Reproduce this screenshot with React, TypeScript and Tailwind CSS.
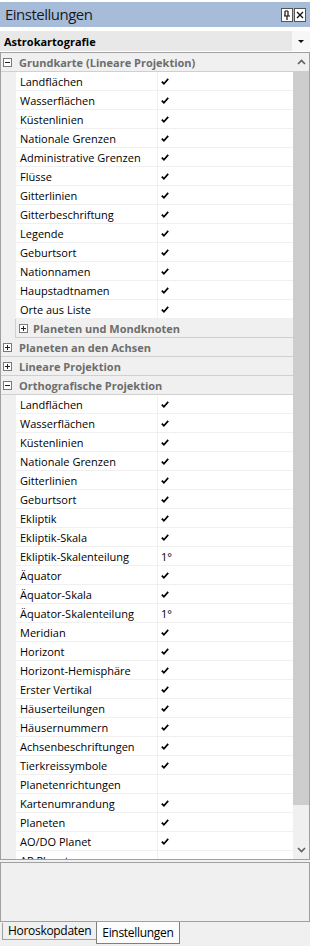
import React from "react";

type Row =
  | { kind: "cat"; label: string; open: boolean; sub?: boolean }
  | { kind: "prop"; label: string; value?: string };

const check = (label: string, value = "check"): Row => ({ kind: "prop", label, value });

const rows: Row[] = [
  { kind: "cat", label: "Grundkarte (Lineare Projektion)", open: true },
  check("Landflächen"),
  check("Wasserflächen"),
  check("Küstenlinien"),
  check("Nationale Grenzen"),
  check("Administrative Grenzen"),
  check("Flüsse"),
  check("Gitterlinien"),
  check("Gitterbeschriftung"),
  check("Legende"),
  check("Geburtsort"),
  check("Nationnamen"),
  check("Haupstadtnamen"),
  check("Orte aus Liste"),
  { kind: "cat", label: "Planeten und Mondknoten", open: false, sub: true },
  { kind: "cat", label: "Planeten an den Achsen", open: false },
  { kind: "cat", label: "Lineare Projektion", open: false },
  { kind: "cat", label: "Orthografische Projektion", open: true },
  check("Landflächen"),
  check("Wasserflächen"),
  check("Küstenlinien"),
  check("Nationale Grenzen"),
  check("Gitterlinien"),
  check("Geburtsort"),
  check("Ekliptik"),
  check("Ekliptik-Skala"),
  check("Ekliptik-Skalenteilung", "1°"),
  check("Äquator"),
  check("Äquator-Skala"),
  check("Äquator-Skalenteilung", "1°"),
  check("Meridian"),
  check("Horizont"),
  check("Horizont-Hemisphäre"),
  check("Erster Vertikal"),
  check("Häuserteilungen"),
  check("Häusernummern"),
  check("Achsenbeschriftungen"),
  check("Tierkreissymbole"),
  check("Planetenrichtungen", ""),
  check("Kartenumrandung"),
  check("Planeten"),
  check("AO/DO Planet"),
  check("AP Planet", ""),
];

function Toggle({ open }: { open: boolean }) {
  return (
    <svg width="9" height="9" viewBox="0 0 9 9" className="shrink-0">
      <rect x="0.5" y="0.5" width="8" height="8" fill="#fff" stroke="#7a7a7a" />
      <path d="M2 4.5h5" stroke="#222" />
      {!open && <path d="M4.5 2v5" stroke="#222" />}
    </svg>
  );
}

function Check() {
  return (
    <svg width="8" height="7" viewBox="0 0 8 7">
      <path d="M0.8 3.6 L2.9 5.7 L7.2 0.9" fill="none" stroke="#000" strokeWidth="1.7" />
    </svg>
  );
}

function Chevron({ up }: { up?: boolean }) {
  return (
    <svg width="9" height="6" viewBox="0 0 9 6">
      <path
        d={up ? "M1 5 L4.5 1.5 L8 5" : "M1 1 L4.5 4.5 L8 1"}
        fill="none"
        stroke="#606060"
        strokeWidth="1.6"
      />
    </svg>
  );
}

function GridRow({ row }: { row: Row }) {
  if (row.kind === "cat") {
    if (row.sub) {
      return (
        <div className="flex h-[19px] shrink-0">
          <div className="w-[14px] bg-[#f0f0f0]" />
          <div className="flex-1 flex items-center gap-[5px] pl-[3px] bg-[#f0f0f0] border-l border-b border-[#d0d0d0]">
            <Toggle open={row.open} />
            <span className="font-bold text-[#6d6d6d]">{row.label}</span>
          </div>
        </div>
      );
    }
    return (
      <div className="flex items-center gap-[7px] h-[19px] shrink-0 pl-[2px] bg-[#f0f0f0] border-b border-[#d0d0d0]">
        <Toggle open={row.open} />
        <span className="font-bold text-[#6d6d6d]">{row.label}</span>
      </div>
    );
  }
  return (
    <div className="flex h-[19px] shrink-0">
      <div className="w-[14px] bg-[#f0f0f0]" />
      <div className="w-[142px] flex items-center pl-[4px] bg-white border-l border-b border-[#f0f0f0] text-black whitespace-nowrap">
        {row.label}
      </div>
      <div className="flex-1 flex items-center pl-[3px] bg-white border-l border-b border-[#f0f0f0] text-black">
        {row.value === "check" ? <Check /> : row.value}
      </div>
    </div>
  );
}

export default function App() {
  return (
    <div
      className="w-[310px] h-[946px] flex flex-col bg-[#f0f0f0] overflow-hidden text-[11px] leading-none"
      style={{ fontFamily: '"Segoe UI", "Open Sans", "Noto Sans", sans-serif' }}
    >
      <div className="bg-white pt-[2px] pb-[1px]">
        <div className="h-[25px] bg-[#a7bcd9] flex items-center justify-between pl-[5px] pr-[4px]">
          <span className="text-[15px] tracking-[-0.5px] text-[#1a1a1a]">Einstellungen</span>
          <div className="flex gap-[1px]">
            <div className="w-[12px] h-[14px] bg-white border border-[#555] flex items-center justify-center">
              <svg width="8" height="10" viewBox="0 0 8 10">
                <path d="M2 1 V6 M5 1 V6 M1 6 H7 M4 6 V10 M2 1 H5" stroke="#111" strokeWidth="1.2" fill="none" />
              </svg>
            </div>
            <div className="w-[12px] h-[14px] bg-white border border-[#555] flex items-center justify-center">
              <svg width="8" height="8" viewBox="0 0 8 8">
                <path d="M1 1 L7 7 M7 1 L1 7" stroke="#111" strokeWidth="1.3" />
              </svg>
            </div>
          </div>
        </div>
        <div className="mt-[4px] h-[20px] flex">
          <div className="flex-1 bg-[#e8e8e8] flex items-center pl-[4px] font-bold text-black">
            Astrokartografie
          </div>
          <div className="w-[18px] bg-[#f7f7f7] flex items-center justify-center">
            <svg width="6" height="3" viewBox="0 0 6 3">
              <path d="M0 0 H6 L3 3 Z" fill="#111" />
            </svg>
          </div>
        </div>
      </div>

      <div className="h-[808px] shrink-0 flex border border-[#a0a0a0] bg-white">
        <div className="flex-1 flex flex-col overflow-hidden">
          {rows.map((row, i) => (
            <GridRow key={i} row={row} />
          ))}
        </div>
        <div className="w-[16px] flex flex-col bg-[#f0f0f0]">
          <div className="h-[18px] flex items-center justify-center">
            <Chevron up />
          </div>
          <div className="h-[734px] bg-[#cdcdcd]" />
          <div className="flex-1 flex items-end justify-center pb-[6px]">
            <Chevron />
          </div>
        </div>
      </div>

      <div className="mt-[2px] h-[60px] shrink-0 border border-[#a0a0a0] bg-[#f0f0f0]" />

      <div className="flex pl-[2px] pt-[1px]">
        <div className="h-[17px] px-[5px] flex items-center border-l border-b border-[#a0a0a0] bg-[#f0f0f0] text-black text-[12px] tracking-[-0.3px]">
          Horoskopdaten
        </div>
        <div className="h-[22px] -mt-[1px] px-[5px] flex items-center border-r border-b border-l border-[#808080] bg-[#fcfcfc] text-black text-[12px] tracking-[-0.3px]">
          Einstellungen
        </div>
      </div>
    </div>
  );
}
